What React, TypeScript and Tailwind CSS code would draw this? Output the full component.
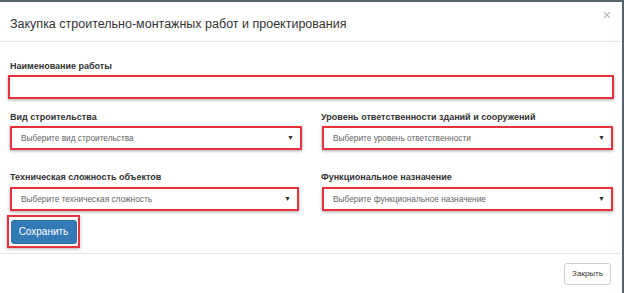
import { X } from "lucide-react";

const font = { fontFamily: '"Liberation Sans", Arial, sans-serif' };

// красная рамка вокруг поля (выделение на скриншоте)
const Select = ({ text, w }: { text: string; w: string }) => (
  <div className={`${w} h-[24px] border-2 border-[#e5323c] shadow-[0_1px_3px_rgba(0,0,0,0.35)] bg-white flex items-center justify-between pl-[9px] pr-[6px]`}>
    <span className="text-[8.3px] text-[#666]">{text}</span>
    <span className="text-[7px] text-[#333]">▼</span>
  </div>
);

const Label = ({ children }: { children: string }) => (
  <label className="block h-[10px] text-[9px] font-bold leading-[10px]">{children}</label>
);

export default function App() {
  return (
    <div style={font} className="w-[624px] h-[293px] bg-white border-t-2 border-r-2 border-[#55656a] overflow-hidden text-[#333]">
      {/* header */}
      <div className="h-[40px] border-b border-[#e5e5e5] flex items-center justify-between pl-[10px] pr-[10px]">
        <h4 className="text-[12.5px] leading-none mt-[5px]">Закупка строительно-монтажных работ и проектирования</h4>
        <X className="w-[10px] h-[10px] text-[#bbb] -mt-[14px]" strokeWidth={3} />
      </div>

      {/* body */}
      <div className="px-[8px]">
        <div className="mt-[19px] ml-[2px]"><Label>Наименование работы</Label></div>
        <div className="mt-[4px] h-[24px] border-2 border-[#e5323c] shadow-[0_1px_3px_rgba(0,0,0,0.35)] bg-white" />

        <div className="grid grid-cols-[313px_1fr] mt-[13px]">
          <div className="pl-[2px]">
            <Label>Вид строительства</Label>
            <div className="mt-[4px]"><Select w="w-[292px]" text="Выберите вид строительства" /></div>
          </div>
          <div>
            <Label>Уровень ответственности зданий и сооружений</Label>
            <div className="mt-[4px] ml-[1px]"><Select w="w-[291px]" text="Выберите уровень ответственности" /></div>
          </div>

          <div className="pl-[2px] mt-[22px]">
            <Label>Техническая сложность объектов</Label>
            <div className="mt-[5px]"><Select w="w-[289px]" text="Выберите техническая сложность" /></div>
          </div>
          <div className="mt-[22px]">
            <Label>Функциональное назначение</Label>
            <div className="mt-[5px] ml-[1px]"><Select w="w-[291px]" text="Выберите функциональное назначение" /></div>
          </div>
        </div>

        <div className="mt-[4px] -ml-[1px] w-[73px] h-[33px] border-2 border-[#e5323c] shadow-[0_1px_3px_rgba(0,0,0,0.3)] flex items-center justify-center">
          <button className="w-[66px] h-[24px] rounded-[3px] bg-[#337ab7] border border-[#2e6da4] text-white text-[10px]">Сохранить</button>
        </div>
      </div>

      {/* footer */}
      <div className="mt-[5px] border-t border-[#e5e5e5] flex justify-end pr-[11px] pt-[9px]">
        <button className="w-[47px] h-[22px] rounded-[3px] border border-[#ccc] bg-white text-[8px] text-[#333]">Закрыть</button>
      </div>
    </div>
  );
}
